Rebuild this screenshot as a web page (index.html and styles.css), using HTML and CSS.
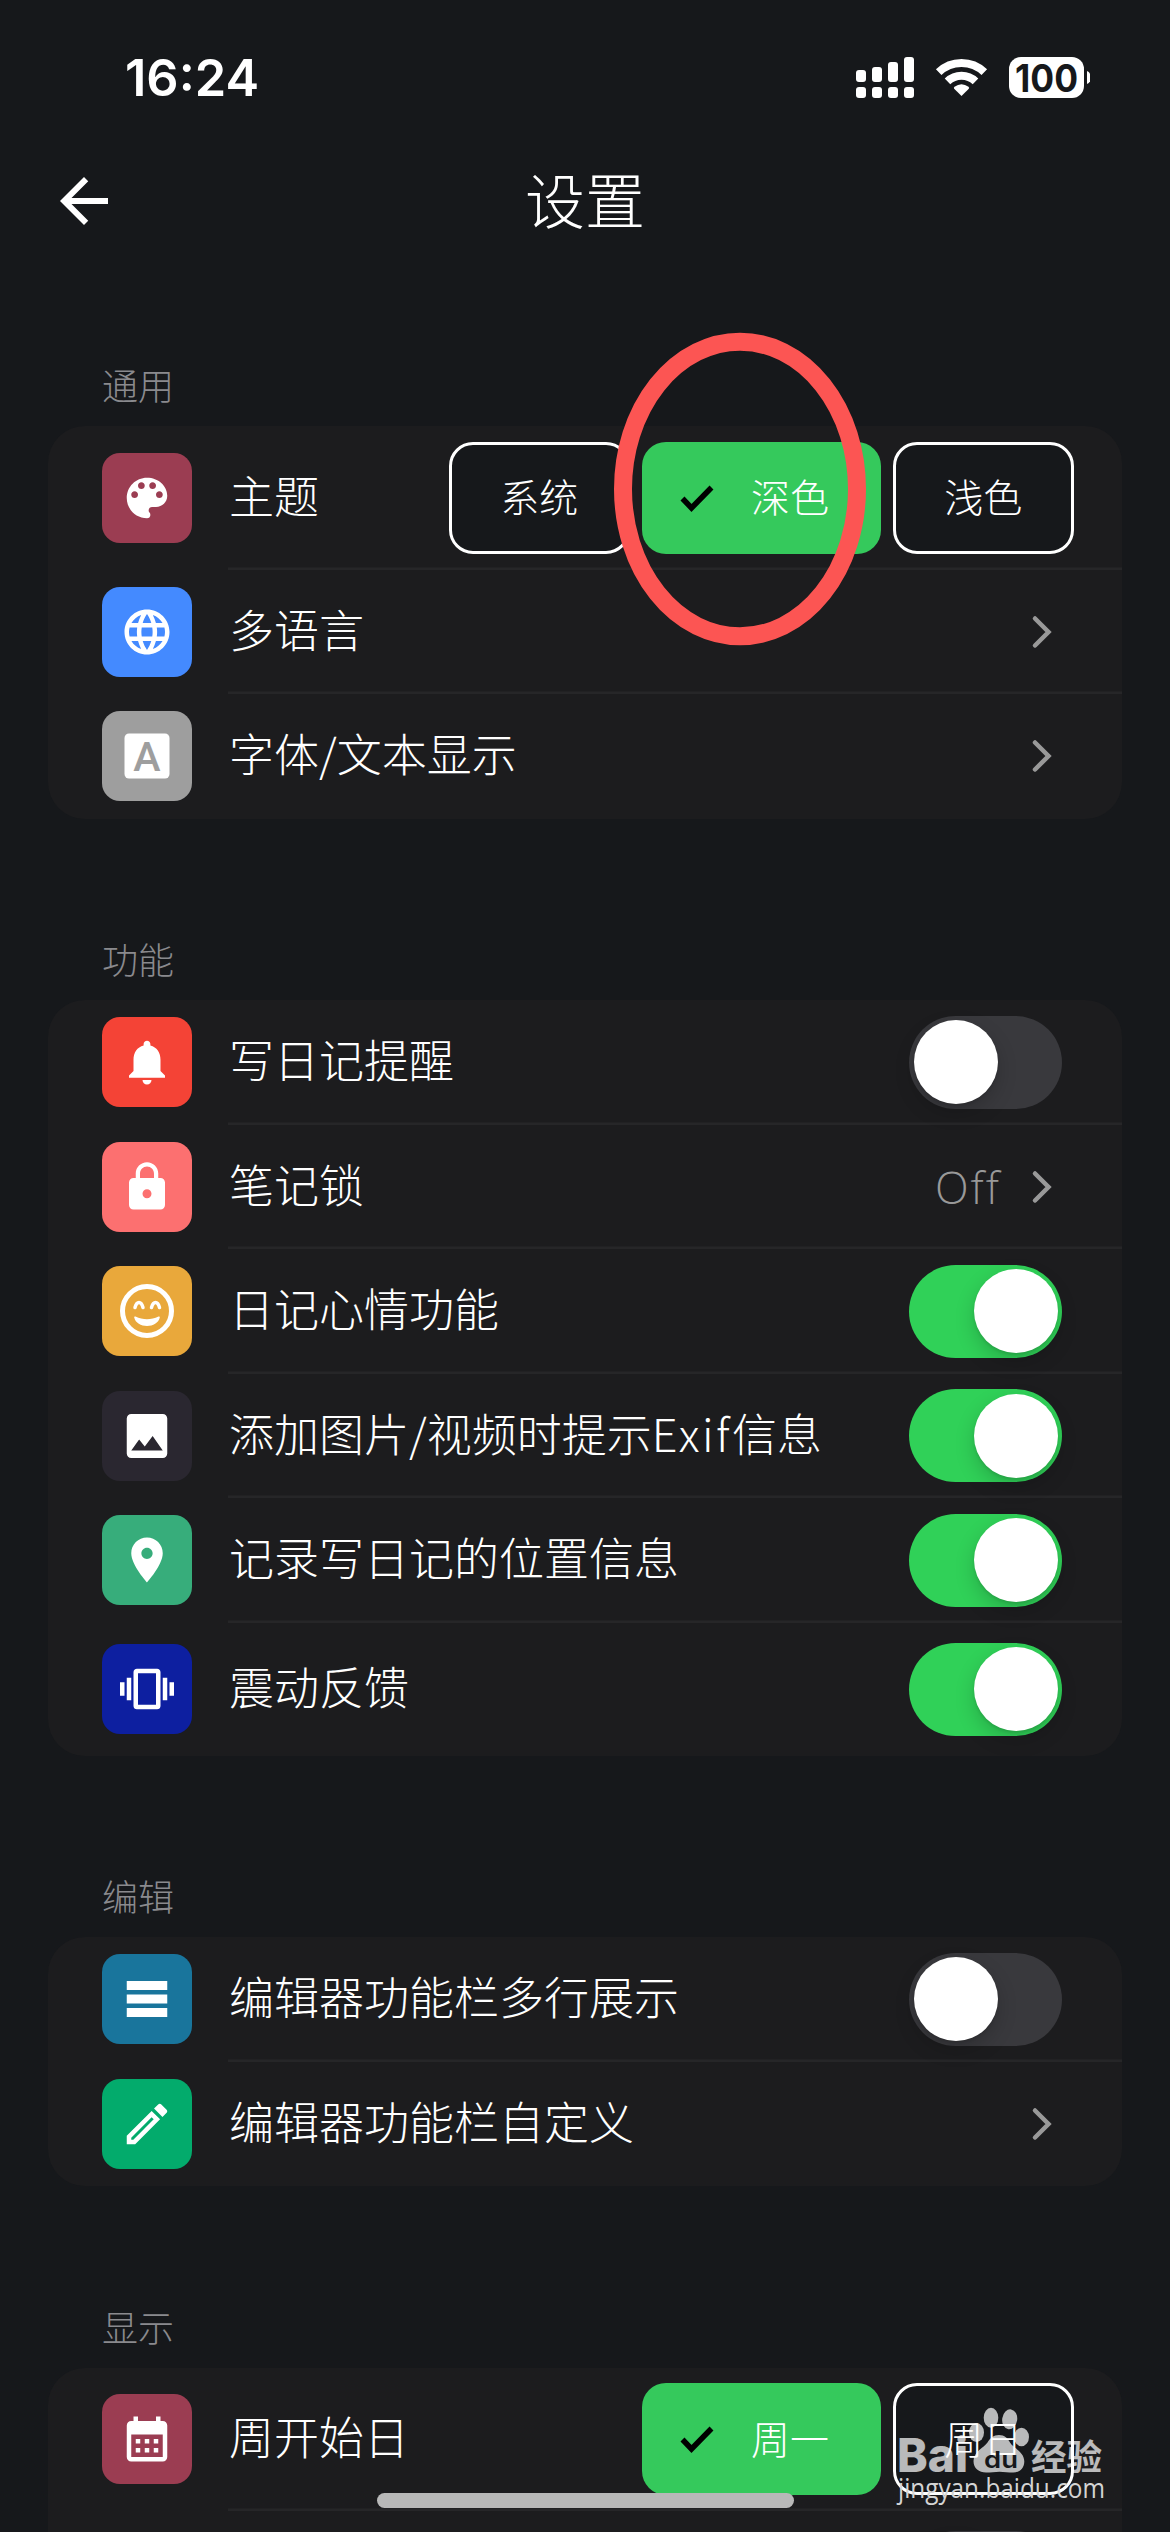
FILE: index.html
```
<!DOCTYPE html>
<html lang="zh-CN">
<head>
<meta charset="utf-8">
<title>设置</title>
<link rel="stylesheet" href="styles.css">
</head>
<body>
<div class="screen">
  <header class="status">
    <span class="time">16:24</span>
    <svg class="status-icons" width="240" height="50" viewBox="850 52 240 50" fill="#fff">
      <rect x="856" y="70" width="10" height="12" rx="3"/><rect x="872" y="67" width="10" height="15" rx="3"/>
      <rect x="888" y="62" width="10" height="20" rx="3"/><rect x="904" y="57" width="10" height="25" rx="3"/>
      <rect x="856" y="87" width="10" height="11" rx="3"/><rect x="872" y="87" width="10" height="11" rx="3"/>
      <rect x="888" y="87" width="10" height="11" rx="3"/><rect x="904" y="87" width="10" height="11" rx="3"/>
      <g fill="none" stroke="#fff" stroke-width="8">
        <path d="M938.7 72.2A33 33 0 0 1 984.3 72.2"/>
        <path d="M947.5 81.4A20.2 20.2 0 0 1 975.5 81.4"/>
      </g>
      <path d="M961.5 96l-7.3-7.3q-.8-1 .3-1.9 7-5 14 0 1.100.9.3 1.900z"/>
      <rect x="1009" y="57" width="75" height="41" rx="12"/>
      <path d="M1087 71c5.500 2.500 5.500 10.500 0 13z"/>
      <text class="battery-text" x="1046.500" y="91.500" text-anchor="middle" textLength="63" lengthAdjust="spacingAndGlyphs">100</text>
    </svg>
  </header>
  <nav class="topbar">
    <svg class="back" viewBox="0 0 24 24" fill="#fff"><path d="M20 11H7.830l5.590-5.590L12 4l-8 8 8 8 1.410-1.410L7.830 13H20v-2z"/></svg>
    <h1>设置</h1>
  </nav>

  <section>
    <h2>通用</h2>
    <div class="card">
      <div class="row row-tall">
        <span class="tile plum"><svg viewBox="0 0 24 24"><path d="M12 3c-4.970 0-9 4.030-9 9s4.030 9 9 9c.83 0 1.500-.67 1.500-1.500 0-.39-.15-.74-.39-1.010-.23-.26-.38-.61-.38-.99 0-.83.67-1.500 1.500-1.500H16c2.760 0 5-2.240 5-5 0-4.420-4.030-8-9-8zm-5.500 9c-.83 0-1.500-.67-1.500-1.500S5.670 9 6.500 9 8 9.670 8 10.500 7.330 12 6.500 12zm3-4C8.670 8 8 7.330 8 6.500S8.670 5 9.500 5s1.500.67 1.500 1.500S10.330 8 9.500 8zm5 0c-.83 0-1.500-.67-1.500-1.500S13.670 5 14.500 5s1.500.67 1.500 1.500S15.330 8 14.500 8zm3 4c-.83 0-1.500-.67-1.500-1.500S16.670 9 17.500 9s1.500.67 1.500 1.500-.67 1.500-1.500 1.500z"/></svg></span>
        <div class="body"><span class="label">主题</span>
          <div class="chips">
            <span class="chip">系统</span>
            <span class="chip on"><svg width="45" height="45" viewBox="0 0 45 45"><path d="M7.500 23.500l9 9.500L36.500 12.500"/></svg>深色</span>
            <span class="chip">浅色</span>
          </div>
        </div>
      </div>
      <div class="row">
        <span class="tile blue"><svg viewBox="0 0 24 24"><path d="M11.990 2C6.470 2 2 6.480 2 12s4.470 10 9.990 10C17.520 22 22 17.520 22 12S17.520 2 11.990 2zm6.930 6h-2.950c-.32-1.250-.78-2.450-1.380-3.560 1.840.63 3.370 1.910 4.330 3.560zM12 4.040c.83 1.200 1.480 2.530 1.910 3.960h-3.820c.43-1.430 1.080-2.760 1.910-3.960zM4.260 14C4.100 13.360 4 12.690 4 12s.1-1.360.26-2h3.380c-.08.66-.14 1.320-.14 2s.06 1.340.14 2H4.260zm.82 2h2.950c.32 1.250.78 2.450 1.380 3.560-1.840-.63-3.370-1.900-4.330-3.560zm2.950-8H5.080c.96-1.660 2.490-2.930 4.330-3.560C8.810 5.550 8.350 6.750 8.030 8zM12 19.960c-.83-1.200-1.480-2.530-1.910-3.960h3.820c-.43 1.430-1.080 2.760-1.910 3.960zM14.340 14H9.660c-.09-.66-.16-1.320-.16-2s.07-1.350.16-2h4.680c.09.65.16 1.320.16 2s-.07 1.340-.16 2zm.25 5.560c.6-1.110 1.060-2.310 1.380-3.560h2.950c-.96 1.650-2.490 2.930-4.330 3.560zM16.360 14c.08-.66.14-1.320.14-2s-.06-1.340-.14-2h3.380c.16.64.26 1.310.26 2s-.1 1.360-.26 2h-3.380z"/></svg></span>
        <div class="body"><span class="label">多语言</span><svg class="chev" viewBox="0 0 24 36"><path d="M4 4.500L17.500 18 4 31.500"/></svg></div>
      </div>
      <div class="row">
        <span class="tile grey"><svg viewBox="0 0 24 24"><rect x="2" y="2" width="20" height="20" rx="2"/><text class="letter" x="12" y="18.500" text-anchor="middle">A</text></svg></span>
        <div class="body"><span class="label">字体/文本显示</span><svg class="chev" viewBox="0 0 24 36"><path d="M4 4.500L17.500 18 4 31.500"/></svg></div>
      </div>
    </div>
  </section>

  <section>
    <h2>功能</h2>
    <div class="card">
      <div class="row">
        <span class="tile red"><svg viewBox="0 0 24 24"><path d="M12 22c1.100 0 2-.9 2-2h-4c0 1.100.89 2 2 2zm6-6v-5c0-3.070-1.640-5.640-4.500-6.320V4c0-.83-.67-1.500-1.500-1.500s-1.500.67-1.500 1.500v.68C7.630 5.360 6 7.920 6 11v5l-2 2v1h16v-1l-2-2z"/></svg></span>
        <div class="body"><span class="label">写日记提醒</span><span class="toggle"></span></div>
      </div>
      <div class="row">
        <span class="tile pink"><svg viewBox="0 0 24 24"><path d="M18 8h-1V6c0-2.760-2.240-5-5-5S7 3.240 7 6v2H6c-1.100 0-2 .9-2 2v10c0 1.100.9 2 2 2h12c1.100 0 2-.9 2-2V10c0-1.100-.9-2-2-2zm-6 9c-1.100 0-2-.9-2-2s.9-2 2-2 2 .9 2 2-.9 2-2 2zm3.100-9H8.900V6c0-1.710 1.390-3.100 3.100-3.100 1.710 0 3.100 1.390 3.100 3.100v2z"/></svg></span>
        <div class="body"><span class="label">笔记锁</span><span class="value">Off</span><svg class="chev" viewBox="0 0 24 36"><path d="M4 4.500L17.500 18 4 31.500"/></svg></div>
      </div>
      <div class="row">
        <span class="tile amber"><svg viewBox="0 0 54 54"><circle cx="27" cy="27" r="24.500" fill="none" stroke="#fff" stroke-width="5"/><path d="M15 23.500C16 20 17.500 18.500 19 18.500S22 20 23 23.500M31.500 23.500C32.500 20 34 18.500 35.500 18.500S38.500 20 39.500 23.500" fill="none" stroke="#fff" stroke-width="3.500" stroke-linecap="round"/><path d="M15.500 32.500C23 36 31 36 38.500 32.500q1.500-.5 1.300 1C38.500 39 33 42 27 42S15.500 39 14.200 33.500q-.2-1.500 1.300-1z"/></svg></span>
        <div class="body"><span class="label">日记心情功能</span><span class="toggle on"></span></div>
      </div>
      <div class="row">
        <span class="tile dark"><svg viewBox="0 0 24 24"><path fill-rule="evenodd" d="M21 19.800V4.200c0-1.100-.9-2-2-2H5c-1.100 0-2 .9-2 2v15.600c0 1.100.9 2 2 2h14c1.100 0 2-.9 2-2zM8.500 13.600l2.500 3.100L14.500 12l4.500 6.400H5l3.500-4.800z"/></svg></span>
        <div class="body"><span class="label">添加图片/视频时提示<span class="latin">Exif</span>信息</span><span class="toggle on"></span></div>
      </div>
      <div class="row">
        <span class="tile mint"><svg viewBox="0 0 24 24"><path d="M12 2C8.130 2 5 5.130 5 9c0 5.250 7 13 7 13s7-7.750 7-13c0-3.870-3.130-7-7-7zm0 9.500c-1.380 0-2.500-1.120-2.500-2.500s1.120-2.500 2.500-2.500 2.500 1.120 2.500 2.500-1.120 2.500-2.500 2.500z"/></svg></span>
        <div class="body"><span class="label">记录写日记的位置信息</span><span class="toggle on"></span></div>
      </div>
      <div class="row row-mid">
        <span class="tile navy"><svg viewBox="0 0 24 24"><path d="M0 15h2V9H0v6zm3 2h2V7H3v10zm19-8v6h2V9h-2zm-3 8h2V7h-2v10zM16.500 3h-9C6.670 3 6 3.670 6 4.500v15c0 .83.67 1.500 1.500 1.500h9c.83 0 1.500-.67 1.500-1.500v-15c0-.83-.67-1.500-1.500-1.500zM16 19H8V5h8v14z"/></svg></span>
        <div class="body"><span class="label">震动反馈</span><span class="toggle on"></span></div>
      </div>
    </div>
  </section>

  <section>
    <h2>编辑</h2>
    <div class="card">
      <div class="row">
        <span class="tile teal"><svg viewBox="0 0 24 24"><path d="M3 4h18v4H3zM3 10h18v4H3zM3 16h18v4H3z"/></svg></span>
        <div class="body"><span class="label">编辑器功能栏多行展示</span><span class="toggle"></span></div>
      </div>
      <div class="row">
        <span class="tile green"><svg viewBox="0 0 24 24"><path d="M14.060 9.020l.92.92L5.920 19H5v-.92l9.060-9.060M17.660 3c-.25 0-.51.1-.7.290l-1.830 1.830 3.750 3.750 1.830-1.830c.39-.39.39-1.020 0-1.410l-2.340-2.340c-.2-.2-.45-.29-.71-.29zm-3.600 3.190L3 17.250V21h3.750L17.810 9.940l-3.750-3.750z"/></svg></span>
        <div class="body"><span class="label">编辑器功能栏自定义</span><svg class="chev" viewBox="0 0 24 36"><path d="M4 4.500L17.500 18 4 31.500"/></svg></div>
      </div>
    </div>
  </section>

  <section>
    <h2>显示</h2>
    <div class="card">
      <div class="row row-tall">
        <span class="tile plum"><svg viewBox="0 0 24 24"><path d="M19 4h-1V2h-2v2H8V2H6v2H5c-1.110 0-1.990.9-1.990 2L3 20c0 1.100.89 2 2 2h14c1.100 0 2-.9 2-2V6c0-1.100-.9-2-2-2zm0 16H5V10h14v10zM9 14H7v-2h2v2zm4 0h-2v-2h2v2zm4 0h-2v-2h2v2zm-8 4H7v-2h2v2zm4 0h-2v-2h2v2zm4 0h-2v-2h2v2z"/></svg></span>
        <div class="body"><span class="label">周开始日</span>
          <div class="chips">
            <span class="chip on"><svg width="45" height="45" viewBox="0 0 45 45"><path d="M7.500 23.500l9 9.500L36.500 12.500"/></svg>周一</span>
            <span class="chip">周日</span>
          </div>
        </div>
      </div>
      <div class="row row-mid"><div class="body"><span class="toggle"></span></div></div>
    </div>
  </section>

  <svg class="ring" width="254" height="314" viewBox="0 0 254 314"><ellipse cx="127" cy="157" rx="117" ry="147.300" fill="none" stroke="#fc5553" stroke-width="18"/></svg>
  <div class="home"></div>
  <svg class="mark" width="230" height="142" viewBox="890 2390 230 142">
    <g opacity=".7" fill="#fff">
      <text class="mark-latin" x="897" y="2471.500" textLength="71" lengthAdjust="spacingAndGlyphs">Bai</text>
      <ellipse cx="991" cy="2417.700" rx="7.300" ry="10"/><ellipse cx="1009.700" cy="2419.300" rx="7.500" ry="10" transform="rotate(8 1009.700 2419.300)"/>
      <ellipse cx="976.500" cy="2432.500" rx="7.500" ry="9.500"/><ellipse cx="1021.500" cy="2437" rx="7.500" ry="9.300"/>
      <path d="M999 2435c5.500 0 9 3.500 11 7.500 3 5.500 14.300 9 14.300 19 0 7-5 11-11 11-5 0-9-.8-13.800-.8s-8.500.8-13.500.8c-7 0-12.500-4-12.500-11.500 0-9.500 10-13 14-18.500 2.500-4.500 6-7.500 11.500-7.500z"/>
      <text class="mark-cjk" x="1031" y="2469.500">经验</text>
    </g>
    <text class="mark-du" x="984" y="2468" textLength="34" lengthAdjust="spacingAndGlyphs">du</text>
    <text class="mark-url" x="898" y="2498" textLength="207" lengthAdjust="spacingAndGlyphs">jingyan.baidu.com</text>
  </svg>
</div>
</body>
</html>
```
FILE: styles.css
```
* { box-sizing: border-box; }
body { margin: 0; background: #16181b; }
.screen {
  position: relative;
  width: 1170px;
  height: 2532px;
  overflow: hidden;
  background: #16181b;
  color: #fff;
  font-family: "Noto Sans CJK SC", sans-serif;
  font-weight: 300;
}
.status {
  display: flex;
  justify-content: space-between;
  align-items: flex-start;
  height: 156px;
  padding: 52px 80px 0 125px;
}
.time { font: 600 50.500px/52px Inter, sans-serif; }
.battery-text { font: 700 38px Inter, sans-serif; fill: #16181b; }
.topbar {
  display: grid;
  grid-template-columns: 72px 1fr 72px;
  align-items: center;
  height: 90px;
  padding: 0 48px;
}
.back { width: 72px; height: 72px; }
h1 { margin: 0; padding-bottom: 6px; font-size: 60px; line-height: 84px; font-weight: 300; text-align: center; }
section { padding: 0 48px; margin-bottom: 99.5px; }
h2 {
  height: 82px;
  margin: 0;
  padding: 19px 0 0 54px;
  color: #8a8a8e;
  font-size: 36px;
  line-height: 42px;
  font-weight: 300;
}
.topbar + section { padding-top: 98px; }
.card { border-radius: 37px; background: #1c1c1e; overflow: hidden; }
.row { display: flex; height: 124.5px; padding-left: 54px; }
.row-tall { height: 143.5px; }
.row-mid { height: 133px; }
.tile {
  display: flex;
  flex: none;
  align-self: center;
  align-items: center;
  justify-content: center;
  width: 90px;
  height: 90px;
  margin-right: 36px;
  border-radius: 18px;
}
.tile svg { width: 54px; height: 54px; fill: #fff; }
.letter { font: 500 18.300px Roboto, sans-serif; fill: #9e9e9e; }
.plum { background: #9b3d52; }
.blue { background: #448aff; }
.grey { background: #9e9e9e; }
.red { background: #f44336; }
.pink { background: #fc7070; }
.amber { background: #e9a83b; }
.dark { background: #2a2730; }
.mint { background: #37ad7b; }
.navy { background: #0d1fa0; }
.teal { background: #19759c; }
.green { background: #03ab6c; }
.body {
  display: flex;
  flex: 1;
  align-items: center;
  padding-right: 60px;
  box-shadow: inset 0 -2.500px #262628;
}
.row:last-child .body { box-shadow: none; }
.label { flex: 1; padding: 0 0 7px 1px; font-size: 45px; white-space: nowrap; }
.latin { letter-spacing: 2.500px; }
.chips { display: flex; gap: 12px; margin-right: -12px; }
.chip {
  display: flex;
  align-items: center;
  justify-content: center;
  width: 181.5px;
  height: 112px;
  padding-bottom: 5px;
  border: 3px solid #fff;
  border-radius: 24px;
  background: #16181b;
  font-size: 39px;
}
.chip.on { width: 238.5px; border: 0; background: #35c95c; justify-content: flex-start; padding-left: 33px; }
.chip svg { position: relative; top: 2px; margin-right: 31px; fill: none; stroke: #000; stroke-width: 5.5px; }
.chev { width: 24px; height: 36px; margin-right: 7px; fill: none; stroke: #999; stroke-width: 4.500px; stroke-linecap: round; }
.value { margin-right: 30px; color: #999; font: 300 44px "Open Sans", sans-serif; font-variant-ligatures: none; letter-spacing: 2px; }
.toggle { display: flex; width: 153px; height: 93px; padding: 4.500px; border-radius: 47px; background: #39393d; }
.toggle::before { content: ""; width: 84px; height: 84px; border-radius: 50%; background: #fff; box-shadow: 0 8px 20px rgba(0,0,0,.18), 0 2px 3px rgba(0,0,0,.1); }
.toggle.on { justify-content: flex-end; background: #30d158; }
.row-mid .toggle { margin-left: auto; }
.ring { position: absolute; left: 613px; top: 332px; }
.home { position: absolute; left: 377px; top: 2493px; width: 417px; height: 15px; border-radius: 8px; background: #b8b8b8; }
.mark { position: absolute; left: 890px; top: 2390px; }
.mark-latin { font: 800 47px Inter, sans-serif; }
.mark-cjk { font: 700 35.500px "Noto Sans CJK SC", sans-serif; }
.mark-du { font: 600 23px Inter, sans-serif; fill: #16181b; }
.mark-url { font: 400 27.500px "Open Sans", sans-serif; fill: #d4d4d4; }
```
